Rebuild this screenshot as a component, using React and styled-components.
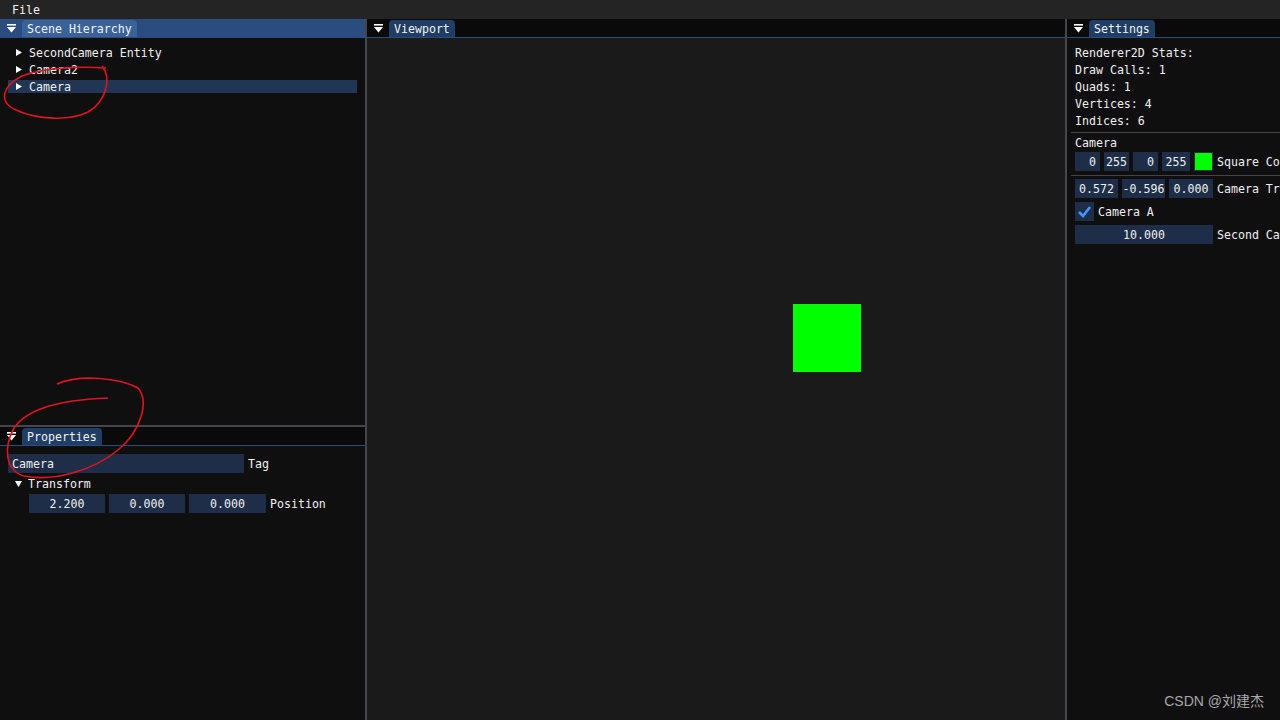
import React from 'react';
import styled, { createGlobalStyle } from 'styled-components';

const GlobalStyle = createGlobalStyle`
  html, body {
    margin: 0;
    padding: 0;
    background: #0f0f0f;
    overflow: hidden;
  }
  #root {
    width: 1280px;
    height: 720px;
  }
`;

const Screen = styled.div`
  position: relative;
  width: 1280px;
  height: 720px;
  display: flex;
  flex-direction: column;
  font-family: "DejaVu Sans Mono", "Liberation Mono", monospace;
  font-size: 11.6px;
  color: #f0f0f0;
  background: #0f0f0f;
`;

const MenuBar = styled.div`
  height: 19px;
  flex: none;
  background: #242424;
  display: flex;
  align-items: center;
  padding-left: 12px;
  box-sizing: border-box;
`;

const Main = styled.div`
  flex: 1;
  display: flex;
  min-height: 0;
`;

const Column = styled.div`
  width: ${p => p.width}px;
  flex: ${p => (p.width ? 'none' : '1')};
  display: flex;
  flex-direction: column;
`;

const VDivider = styled.div`
  width: 2px;
  flex: none;
  background: #45454d;
`;

const HDivider = styled.div`
  height: 2px;
  flex: none;
  background: #45454d;
`;

const Panel = styled.div`
  display: flex;
  flex-direction: column;
  flex: ${p => (p.height ? 'none' : '1')};
  height: ${p => (p.height ? `${p.height}px` : 'auto')};
  background: ${p => p.bg || '#0f0f0f'};
  min-height: 0;
`;

const TitleBar = styled.div`
  height: 19px;
  flex: none;
  box-sizing: border-box;
  display: flex;
  align-items: flex-end;
  padding-left: 6px;
  background: ${p => (p.focused ? '#2a4c7e' : '#0a0a0a')};
  border-bottom: 1px solid #2a4c7e;
`;

const MenuButton = styled.div`
  width: 10px;
  height: 17px;
  display: flex;
  align-items: center;
  justify-content: center;
  margin-right: 6px;
`;

const Tab = styled.div`
  height: 17px;
  padding: 0 5px;
  display: flex;
  align-items: center;
  border-radius: 4px 4px 0 0;
  background: ${p => (p.focused ? '#3a6298' : '#203d63')};
  color: #f2f2f2;
`;

const Body = styled.div`
  flex: 1;
  padding: ${p => p.pad || '6px 8px'};
  display: flex;
  flex-direction: column;
`;

const TreeRow = styled.div`
  height: 13px;
  margin: 2px 0;
  display: flex;
  align-items: center;
  padding-left: 8px;
  background: ${p => (p.selected ? '#213655' : 'transparent')};
`;

const Arrow = styled.span`
  width: 13px;
  display: inline-flex;
  align-items: center;
`;

const Line = styled.div`
  height: 17px;
  display: flex;
  align-items: center;
  padding-left: ${p => p.indent || 0}px;
  margin-top: ${p => p.mt || 0}px;
`;

const Separator = styled.div`
  height: 1px;
  background: #434348;
  margin: ${p => p.m || '4px -4px 4px -4px'};
`;

const Row = styled.div`
  display: flex;
  align-items: center;
  gap: 4px;
  height: 19px;
  margin: ${p => p.m || '0'};
`;

const Input = styled.div`
  width: ${p => p.w}px;
  height: 19px;
  flex: none;
  background: #1e2e48;
  display: flex;
  align-items: center;
  justify-content: ${p => p.align || 'center'};
  padding: 0 4px;
  box-sizing: border-box;
  white-space: nowrap;
  overflow: hidden;
`;

const Label = styled.span`
  white-space: nowrap;
  overflow: hidden;
`;

const Swatch = styled.div`
  width: 19px;
  height: 19px;
  flex: none;
  background: #00ff00;
  box-sizing: border-box;
  border: 1px solid #1e2e48;
`;

const CheckBox = styled.div`
  width: 19px;
  height: 19px;
  flex: none;
  background: #1e2e48;
  display: flex;
  align-items: center;
  justify-content: center;
`;

const ViewportArea = styled.div`
  flex: 1;
  background: #1a1a1a;
  display: flex;
  align-items: flex-start;
  justify-content: flex-start;
  padding: 266px 0 0 426px;
`;

const Square = styled.div`
  width: 68px;
  height: 68px;
  background: #00ff00;
`;

const Watermark = styled.div`
  position: absolute;
  right: 16px;
  bottom: 10px;
  font-family: "Liberation Sans", "Noto Sans CJK SC", sans-serif;
  font-size: 14px;
  color: #a8a8a8;
`;

const Annotations = styled.svg`
  position: absolute;
  left: 0;
  top: 0;
  pointer-events: none;
`;

const WindowMenuIcon = () => (
  <svg width="9" height="9" viewBox="0 0 9 9">
    <rect x="0" y="0" width="9" height="1.6" fill="#fff" />
    <polygon points="0,3 9,3 4.5,8.5" fill="#fff" />
  </svg>
);

const RightArrow = () => (
  <svg width="6" height="7" viewBox="0 0 6 7">
    <polygon points="0,0 6,3.5 0,7" fill="#fff" />
  </svg>
);

const DownArrow = () => (
  <svg width="7" height="6" viewBox="0 0 7 6">
    <polygon points="0,0 7,0 3.5,6" fill="#fff" />
  </svg>
);

const Check = () => (
  <svg width="15" height="13" viewBox="0 0 15 13">
    <polyline points="2,7 6,11 13,2" fill="none" stroke="#4296fa" strokeWidth="2.6" />
  </svg>
);

const Window = ({ title, focused, children }) => (
  <>
    <TitleBar focused={focused}>
      <MenuButton><WindowMenuIcon /></MenuButton>
      <Tab focused={focused}>{title}</Tab>
    </TitleBar>
    {children}
  </>
);

export default function App() {
  return (
    <Screen>
      <GlobalStyle />
      <MenuBar>File</MenuBar>
      <Main>
        <Column width={365}>
          <Panel height={406}>
            <Window title="Scene Hierarchy" focused>
              <Body pad="6px 8px 0 8px">
                <TreeRow><Arrow><RightArrow /></Arrow>SecondCamera Entity</TreeRow>
                <TreeRow><Arrow><RightArrow /></Arrow>Camera2</TreeRow>
                <TreeRow selected><Arrow><RightArrow /></Arrow>Camera</TreeRow>
              </Body>
            </Window>
          </Panel>
          <HDivider />
          <Panel>
            <Window title="Properties">
              <Body pad="8px 8px 0 8px">
                <Row>
                  <Input w={236} align="flex-start">Camera</Input>
                  <Label>Tag</Label>
                </Row>
                <Line indent={7} mt={2}>
                  <Arrow><DownArrow /></Arrow>Transform
                </Line>
                <Row m="2px 0 0 21px">
                  <Input w={76}>2.200</Input>
                  <Input w={76}>0.000</Input>
                  <Input w={77}>0.000</Input>
                  <Label>Position</Label>
                </Row>
              </Body>
            </Window>
          </Panel>
        </Column>
        <VDivider />
        <Column>
          <Panel bg="#1a1a1a">
            <Window title="Viewport">
              <ViewportArea>
                <Square />
              </ViewportArea>
            </Window>
          </Panel>
        </Column>
        <VDivider />
        <Column width={213}>
          <Panel>
            <Window title="Settings">
              <Body pad="6px 0 0 8px">
                <Line>Renderer2D Stats:</Line>
                <Line>Draw Calls: 1</Line>
                <Line>Quads: 1</Line>
                <Line>Vertices: 4</Line>
                <Line>Indices: 6</Line>
                <Separator m="3px 0 1px -4px" />
                <Line>Camera</Line>
                <Row m="1px 0 0 0">
                  <Input w={25} align="flex-end">0</Input>
                  <Input w={25}>255</Input>
                  <Input w={25} align="flex-end">0</Input>
                  <Input w={28}>255</Input>
                  <Swatch />
                  <Label>Square Color</Label>
                </Row>
                <Separator m="4px 0 3px -4px" />
                <Row>
                  <Input w={43}>0.572</Input>
                  <Input w={43}>-0.596</Input>
                  <Input w={44}>0.000</Input>
                  <Label>Camera Transform</Label>
                </Row>
                <Row m="4px 0 0 0">
                  <CheckBox><Check /></CheckBox>
                  <Label>Camera A</Label>
                </Row>
                <Row m="4px 0 0 0">
                  <Input w={138}>10.000</Input>
                  <Label>Second Camera Ortho Size</Label>
                </Row>
              </Body>
            </Window>
          </Panel>
        </Column>
      </Main>
      <Annotations width="1280" height="720" viewBox="0 0 1280 720">
        <path
          d="M102 66 C112 78 106 102 88 112 C70 121 38 120 16 110 C-2 102 2 86 22 76 C42 68 78 66 106 68"
          fill="none" stroke="#e0141e" strokeWidth="1.6"
        />
        <path
          d="M57 384 C80 374 120 378 138 388 C150 402 140 432 118 450 C94 470 54 482 24 476 C4 470 4 446 14 428 C28 408 60 400 108 398"
          fill="none" stroke="#e0141e" strokeWidth="1.6"
        />
      </Annotations>
      <Watermark>CSDN @刘建杰</Watermark>
    </Screen>
  );
}
